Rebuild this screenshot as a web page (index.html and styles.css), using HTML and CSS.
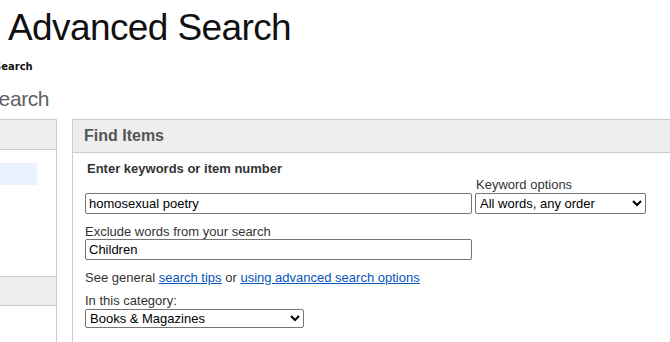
FILE: index.html
```html
<!DOCTYPE html>
<html lang="en">
  <head>
    <meta charset="UTF-8" />
    <meta name="viewport" content="width=device-width, initial-scale=1.0" />
    <title>Advanced Search</title>
    <link rel="stylesheet" href="styles.css">
  </head>
  <body>
    <div class="page">
      <h1 class="title">Advanced Search</h1>
      <div class="crumb">Search</div>
      <h2 class="subtitle">Search</h2>

      <div class="columns">
        <aside class="side">
          <div class="side-head"></div>
          <div class="side-body">
            <div class="side-item active"></div>
          </div>
          <div class="side-head"></div>
          <div class="side-body"></div>
        </aside>

        <section class="panel">
          <div class="panel-head">Find Items</div>
          <div class="panel-body">
            <div class="field-title">Enter keywords or item number</div>

            <div class="kw-row">
              <input class="text-input" type="text" value="homosexual poetry" />
              <label class="kw-options">
                <span class="label">Keyword options</span>
                <select class="select kw-select">
                  <option>All words, any order</option>
                  <option>Any words, any order</option>
                  <option>Exact words, exact order</option>
                </select>
              </label>
            </div>

            <label class="field">
              <span class="label">Exclude words from your search</span>
              <input class="text-input" type="text" value="Children" />
            </label>

            <p class="tips">
              See general <a href="#">search tips</a> or
              <a href="#">using advanced search options</a>
            </p>

            <label class="field category">
              <span class="label">In this category:</span>
              <select class="select cat-select">
                <option>Books &amp; Magazines</option>
                <option>All Categories</option>
              </select>
            </label>
          </div>
        </section>
      </div>
    </div>
  </body>
</html>
```

FILE: styles.css
```css
:root {
  --border: #cccccc;
  --head-bg: #eeeeee;
  --text: #333333;
  --link: #0654ba;
}

* {
  margin: 0;
  padding: 0;
  box-sizing: border-box;
}

html,
body {
  overflow: hidden;
}

body {
  font-family: Arial, "Liberation Sans", sans-serif;
  font-size: 13px;
  color: var(--text);
  background: #ffffff;
  width: 670px;
  height: 342px;
}

.title {
  margin-top: 6px;
  padding-left: 8px;
  font-size: 37px;
  line-height: 44px;
  font-weight: normal;
  letter-spacing: -0.6px;
  color: #111;
}

.crumb {
  margin-left: -6px;
  margin-top: 10px;
  font-family: "DejaVu Sans", Verdana, sans-serif;
  font-size: 10px;
  font-weight: bold;
  line-height: 14px;
  color: #111;
}

.subtitle {
  margin-left: -15px;
  margin-top: 11px;
  font-size: 21px;
  line-height: 28px;
  font-weight: normal;
  letter-spacing: -0.4px;
  color: #5f5f5f;
}

.columns {
  display: flex;
  margin-top: 6px;
  width: 760px;
}

/* left navigation column */
.side {
  flex: none;
  width: 100px;
  margin-left: -43px;
  border: 1px solid var(--border);
  border-bottom: none;
}

.side-head {
  height: 30px;
  background: var(--head-bg);
  border-bottom: 1px solid var(--border);
}

.side-head + .side-body + .side-head {
  border-top: 1px solid var(--border);
  height: 30px;
}

.side-body {
  height: 126px;
  padding-top: 13px;
}

.side-item {
  height: 22px;
  margin-right: 19px;
}

.side-item.active {
  background: #e8f3fd;
}

/* main panel */
.panel {
  flex: none;
  width: 640px;
  margin-left: 15px;
  border: 1px solid var(--border);
  border-bottom: none;
}

.panel-head {
  height: 33px;
  padding-left: 11px;
  background: var(--head-bg);
  border-bottom: 1px solid var(--border);
  font-size: 16px;
  font-weight: bold;
  line-height: 32px;
  color: #555;
}

.panel-body {
  padding: 8px 0 0 12px;
}

.field-title {
  padding-left: 2px;
  font-weight: bold;
  line-height: 16px;
}

.kw-row {
  display: flex;
  align-items: flex-end;
  gap: 3px;
}

.label {
  display: block;
  line-height: 16px;
}

.kw-options .label {
  padding-left: 1px;
}

.text-input {
  display: block;
  width: 387px;
  height: 21px;
  padding: 0 3px;
  border: 1px solid #767676;
  border-radius: 2px;
  font-family: Arial, "Liberation Sans", sans-serif;
  font-size: 13px;
  color: #000;
  background: #fff;
}

.select {
  display: block;
  height: 21px;
  border: 1px solid #767676;
  border-radius: 2px;
  font-family: Arial, "Liberation Sans", sans-serif;
  font-size: 13px;
  color: #000;
  background: #fff;
}

.kw-select {
  width: 171px;
}

.field {
  display: block;
  margin-top: 11px;
}

.field .label {
  line-height: 14px;
}

.tips {
  margin-top: 10px;
  line-height: 16px;
}

.tips a {
  color: var(--link);
  text-decoration: underline;
}

.category {
  margin-top: 7px;
}

.category .label {
  line-height: 15px;
}

.cat-select {
  width: 219px;
  height: 19px;
  margin-top: 1px;
}
```
